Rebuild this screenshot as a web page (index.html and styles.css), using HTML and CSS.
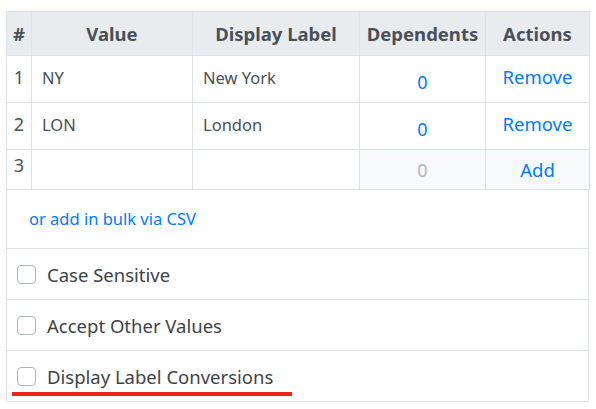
FILE: index.html
```html
<!DOCTYPE html>
<html>
<head>
<meta charset="utf-8">
<link rel="stylesheet" href="styles.css">
</head>
<body>
<div class="panel">
  <table class="grid">
    <colgroup>
      <col class="c-num"><col class="c-val"><col class="c-lab"><col class="c-dep"><col class="c-act">
    </colgroup>
    <thead>
      <tr class="head">
        <th>#</th><th>Value</th><th>Display Label</th><th>Dependents</th><th>Actions</th>
      </tr>
    </thead>
    <tbody>
      <tr class="row">
        <td class="num">1</td><td class="txt">NY</td><td class="txt">New York</td>
        <td class="dep"><a class="link">0</a></td><td class="act"><a class="link">Remove</a></td>
      </tr>
      <tr class="row">
        <td class="num">2</td><td class="txt">LON</td><td class="txt">London</td>
        <td class="dep"><a class="link">0</a></td><td class="act"><a class="link">Remove</a></td>
      </tr>
      <tr class="row new">
        <td class="num">3</td><td class="txt"></td><td class="txt"></td>
        <td class="dep muted-cell"><span class="muted">0</span></td><td class="act muted-cell"><a class="link">Add</a></td>
      </tr>
    </tbody>
  </table>
  <div class="bulk"><a class="link">or add in bulk via CSV</a></div>
  <label class="opt"><span class="box"></span><span>Case Sensitive</span></label>
  <label class="opt"><span class="box"></span><span>Accept Other Values</span></label>
  <label class="opt last"><span class="box"></span><span>Display Label Conversions</span><span class="mark"></span></label>
</div>
</body>
</html>
```
FILE: styles.css
```css
* { box-sizing: border-box; }
html, body { margin: 0; padding: 0; background: #fff; }
body {
  font-family: "Noto Sans", "Open Sans", sans-serif;
  font-size: 16.5px;
  color: #495057;
}
.panel {
  margin: 11px 0 0 6px;
  width: 583px;
}
.grid {
  width: 583px;
  border-collapse: collapse;
  table-layout: fixed;
}
.c-num { width: 25px; }
.c-val { width: 161px; }
.c-lab { width: 167px; }
.c-dep { width: 126px; }
.c-act { width: 104px; }
.grid th, .grid td {
  border: 1px solid #dee2e6;
  padding: 0;
}
.head th {
  background: #e9ecef;
  height: 44px;
  font-weight: 700;
  font-size: 18.5px;
  color: #495057;
  text-align: center;
  vertical-align: middle;
}
.row td { height: 47px; vertical-align: middle; }
.row.new td { height: 40px; }
.num { text-align: center; font-size: 18px; padding-bottom: 4px !important; }
.txt { padding-left: 10px !important; padding-bottom: 4px !important; }
.dep { text-align: center; padding-top: 6px !important; font-size: 18px; }
.act { text-align: center; padding-bottom: 6px !important; font-size: 18.5px; }
.row.new .num { padding-bottom: 10px !important; }
.row.new .dep, .row.new .act { padding: 0 !important; }
.muted-cell { background: #f8f9fa; }
.muted { color: #adb5bd; }
.link { color: #007bff; text-decoration: none; cursor: pointer; }
.bulk {
  height: 59px;
  border: 1px solid #dee2e6;
  border-top: none;
  display: flex;
  align-items: center;
  padding: 0 0 2px 22px;
}
.opt {
  position: relative;
  height: 51px;
  border: 1px solid #dee2e6;
  border-top: none;
  display: flex;
  align-items: center;
  gap: 11px;
  padding-left: 10px;
  font-size: 18.5px;
  color: #3d4349;
}
.box {
  width: 19px;
  height: 19px;
  border: 1px solid #adb5bd;
  border-radius: 4px;
  background: #fff;
  flex: none;
}
.mark {
  position: absolute;
  left: 5px;
  top: 41px;
  width: 280px;
  height: 4px;
  background: #ee2418;
}
```
